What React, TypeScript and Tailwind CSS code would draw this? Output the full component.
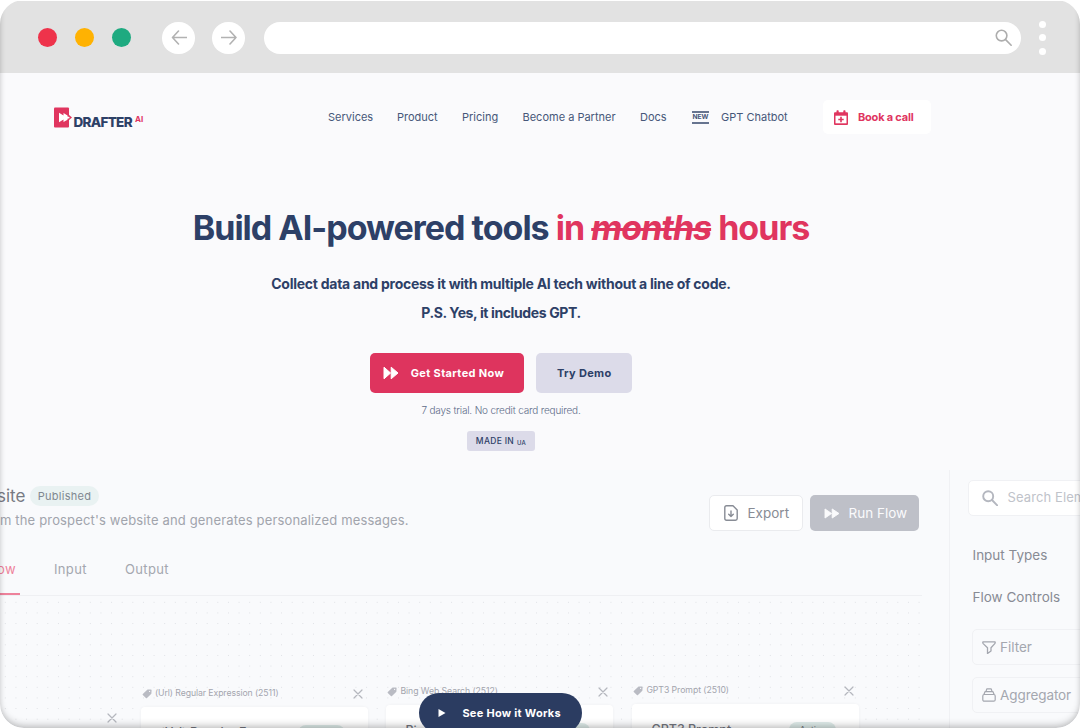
import React from "react";

type IconProps = { className?: string };

const FastForward = ({ className }: IconProps) => (
  <svg viewBox="0 0 16 14" preserveAspectRatio="none" className={className} fill="currentColor" stroke="currentColor" strokeWidth="1" strokeLinejoin="round">
    <path d="M1 1.200 7.600 7 1 12.800ZM8.200 1.200 15 7l-6.800 5.800Z" />
  </svg>
);

const Tag = ({ className }: IconProps) => (
  <svg viewBox="0 0 10 10" className={className} fill="currentColor">
    <path d="M5.600.6 9 .4q.6 0 .6.6l-.2 3.400q0 .3-.3.6L5 9.100q-.6.5-1.100 0L.8 6.100q-.5-.6 0-1.100L5 .9q.3-.3.6-.3Z" />
    <circle cx="7.600" cy="2.400" r=".6" fill="#fafafc" />
  </svg>
);

const Close = ({ className }: IconProps) => (
  <svg viewBox="0 0 10 10" className={className} fill="none" stroke="currentColor" strokeWidth="1.200" strokeLinecap="round">
    <path d="m1 1 8 8M9 1 1 9" />
  </svg>
);

const Magnifier = ({ className, width = 1.2 }: IconProps & { width?: number }) => (
  <svg viewBox="0 0 16 16" className={className} fill="none" stroke="currentColor" strokeWidth={width} strokeLinecap="round">
    <circle cx="6.200" cy="6.200" r="5" />
    <path d="m10 10 5.200 5.300" />
  </svg>
);

function BrowserBar() {
  return (
    <header className="mt-px flex h-[72px] shrink-0 items-center bg-[#e2e2e2] pb-px pl-[38.300px] pt-[2.500px]">
      <div className="flex gap-[18px]">
        <span className="h-[19px] w-[19px] rounded-full bg-[#ee334b]" />
        <span className="h-[19px] w-[19px] rounded-full bg-[#ffb202]" />
        <span className="h-[19px] w-[19px] rounded-full bg-[#1eaa80]" />
      </div>
      <div className="ml-[31px] flex gap-[17px] text-[#b2b2b2]">
        {["M15.500 7.500H1.500m6-6.500-6 6.500 6 6.500", "M.5 7.500h14.500m-6-6.500 6 6.500-6 6.500"].map((d) => (
          <span key={d} className="flex h-8 w-[33px] items-center justify-center rounded-full bg-white">
            <svg viewBox="0 0 16 15" className="h-[15px] w-4" fill="none" stroke="currentColor" strokeWidth="1.600" strokeLinecap="round" strokeLinejoin="round">
              <path d={d} />
            </svg>
          </span>
        ))}
      </div>
      <div className="ml-[19px] flex h-8 w-[757px] items-center justify-end rounded-full bg-white pr-[9px] text-[#adadad]">
        <Magnifier className="h-[17px] w-[17px]" width={1.5} />
      </div>
      <div className="ml-[18px] flex flex-col gap-[6.500px]">
        <span className="h-[7px] w-[6.500px] rounded-full bg-white" />
        <span className="h-[7px] w-[6.500px] rounded-full bg-white" />
        <span className="h-[7px] w-[6.500px] rounded-full bg-white" />
      </div>
    </header>
  );
}

function Logo() {
  return (
    <div className="flex h-[21px] w-[274.500px] items-start">
      <svg viewBox="0 0 18 21" className="h-[21px] w-[18px]">
        <rect x="0" y="0.500" width="15" height="20" rx="1" fill="#e0355f" />
        <path d="M14.500 7.500 18 10.500l-3.500 3Z" fill="#e0355f" />
        <path d="M5 5.800 9.500 8.500V6l4 2.500v1l2 .5v1.200l-2 .5v1L9.500 15v-2.500L5 15.200Z" fill="#fff" />
      </svg>
      <span className="ml-[2px] mt-[5px] text-[13.500px] font-extrabold leading-[20px] tracking-[-0.700px] text-[#2d4067]">DRAFTER</span>
      <span className="ml-[3px] mt-[7px] text-[8px] font-bold leading-[11px] text-[#e0355f]">AI</span>
    </div>
  );
}

function Nav() {
  return (
    <nav className="flex h-[34px] items-center pl-[53.500px] text-[11px] text-[#465779]">
      <Logo />
      <a className="w-[69px]">Services</a>
      <a className="w-[65px]">Product</a>
      <a className="w-[60.500px]">Pricing</a>
      <a className="w-[117.500px]">Become a Partner</a>
      <a className="w-[52px]">Docs</a>
      <span className="mt-px flex h-[13px] w-[17px] items-center justify-center border-y-2 border-[#66748f] text-[6.700px] font-bold leading-none tracking-[-0.100px]">NEW</span>
      <a className="ml-3 w-[102px]">GPT Chatbot</a>
      <button className="flex h-[34px] w-[108px] items-center rounded-[5px] bg-white pl-[11px] font-bold text-[#e0355f]">
        <svg viewBox="0 0 14 15" className="h-[15px] w-[14px]">
          <path d="M1 2.200h12q1 0 1 1V14q0 1-1 1H1q-1 0-1-1V3.200q0-1 1-1Z" fill="currentColor" />
          <rect x="2.500" y=".3" width="2.200" height="3.200" rx=".8" fill="currentColor" />
          <rect x="9.300" y=".3" width="2.200" height="3.200" rx=".8" fill="currentColor" />
          <path d="M1.500 5.700h11v7.600h-11Z" fill="#fff" />
          <path d="M7 6.800v5.400M4.300 9.500h5.400" stroke="currentColor" strokeWidth="1.600" />
        </svg>
        <span className="ml-[10px] tracking-[-0.200px]">Book a call</span>
      </button>
    </nav>
  );
}

function Hero() {
  return (
    <section className="flex w-[1002px] flex-col items-center text-[#2d4067]">
      <h1 className="mt-[70px] h-12 whitespace-nowrap text-[34px] font-bold leading-[48px] tracking-[-0.990px]">
        Build AI-powered tools{" "}
        <span className="text-[#e0355f]">
          in <s className="italic decoration-[3px]">months</s> hours
        </span>
      </h1>
      <p className="mt-[18px] whitespace-nowrap text-center text-[14px] font-bold leading-[28.500px] tracking-[-0.260px]">
        Collect data and process it with multiple AI tech without a line of code.
        <br />
        <span className="tracking-[-0.380px]">P.S. Yes, it includes GPT.</span>
      </p>
      <div className="mt-[26px] flex gap-3 text-[11px] font-bold tracking-[0.350px]">
        <button className="flex h-10 w-[154.500px] items-center rounded-[5px] bg-[#de345e] pl-[13px] text-white">
          <FastForward className="h-[14px] w-4" />
          <span className="ml-3">Get Started Now</span>
        </button>
        <button className="h-10 w-24 rounded-[5px] bg-[#dcdbe9]">Try Demo</button>
      </div>
      <p className="mt-[9px] text-[10px] font-light leading-4 tracking-[-0.180px] text-[#5d6b88]">7 days trial. No credit card required.</p>
      <span className="mt-[13px] flex h-5 w-[68px] items-center justify-center gap-[3px] rounded-[3px] bg-[#dcdbe9] pt-px text-[8.500px] font-medium tracking-[0.300px]">
        MADE IN <span className="mt-px text-[6px]">UA</span>
      </span>
    </section>
  );
}

function FlowNode({ place, label, title, status, tracking }: { place: string; label: string; title: string; status: string; tracking: string }) {
  return (
    <div className={`absolute w-[227px] ${place}`}>
      <div className="flex h-[11px] items-center px-[1px] text-[8.700px] text-[#a3a5ae]">
        <Tag className="h-[10px] w-[10px] text-[#b9bbc3]" />
        <span className={`ml-[3px] whitespace-nowrap ${tracking}`}>{label}</span>
        <Close className="ml-auto mr-[4px] h-[10px] w-[10px] text-[#b5b7be]" />
      </div>
      <div className="mt-[8px] flex h-20 justify-between rounded-[4px] bg-white pl-[19px] pr-[23px] pt-[17px] shadow-[0_0_3px_rgba(60,70,90,0.06)]">
        <span className="text-[12.500px] font-medium leading-[18px] text-[#74777f]">{title}</span>
        <span className="mt-px h-4 w-[47px] rounded-full bg-[#dfecea] text-center text-[9px] leading-4 text-[#74777f]">{status}</span>
      </div>
    </div>
  );
}

function Workspace() {
  return (
    <section className="flex h-[258px] bg-[#f9fafc]">
      <div className="w-[949px] shrink-0 pt-[13px]">
        <div className="flex h-[111px] justify-between pr-[30.500px]">
          <div className="-ml-[3px]">
            <div className="flex h-[26px] items-center text-[#777a83]">
              <h2 className="w-[33px] text-[17px] leading-6">site</h2>
              <span className="flex h-5 w-[69px] items-center justify-center rounded-full bg-[#e9f2f2] text-[11px] tracking-[0.250px] text-[#7f8790]">Published</span>
            </div>
            <p className="whitespace-nowrap pl-[3px] text-[13px] leading-[23px] tracking-[0.160px] text-[#a1a4ac]">m the prospect's website and generates personalized messages.</p>
            <div className="mt-[27px] flex text-[13px] leading-[20px] tracking-[0.350px] text-[#a4a7af]">
              <span className="w-[57px] text-[#ee829b]">ow</span>
              <span className="w-[71px]">Input</span>
              <span>Output</span>
            </div>
          </div>
          <div className="flex gap-[7px] pt-3 text-[13.500px]">
            <button className="flex h-9 w-[94px] items-center rounded-[5px] border border-[#eaebee] bg-white pl-[14px] text-[#888c95]">
              <svg viewBox="0 0 14 16" className="h-4 w-[14px]" fill="none" stroke="currentColor" strokeWidth="1.400" strokeLinejoin="round" strokeLinecap="round">
                <path d="M2.500.8H9L13.200 5v8.500q0 1.700-1.700 1.700h-9Q.8 15.200.8 13.500v-11Q.8.8 2.500.8Z" />
                <path d="M7 6v5.500M4.700 9.300 7 11.500l2.300-2.200" />
              </svg>
              <span className="ml-[10px]">Export</span>
            </button>
            <button className="flex h-9 w-[109px] items-center rounded-[5px] bg-[#bec0c8] pl-[14px] text-[#fafafc]">
              <FastForward className="h-[11px] w-4" />
              <span className="ml-[9px] whitespace-nowrap">Run Flow</span>
            </button>
          </div>
        </div>
        <div className="flex h-[2px] w-[922px] border-b border-[#eff0f3]">
          <span className="-mt-px h-[2px] w-5 bg-[#ee829b]" />
        </div>
        <div className="relative h-[131px] w-[927px] bg-[radial-gradient(circle,#dfe1e5_0.400px,transparent_0.900px)] bg-[size:10.640px_10.640px] bg-[position:0px_1px]">
          <Close className="absolute left-[107px] top-[116.500px] h-[10px] w-[10px] text-[#b5b7be]" />
          <FlowNode place="left-[141px] top-[92px]" tracking="tracking-[-0.080px]" label="(Url) Regular Expression (2511)" title="(Url) Regular Exp..." status="Active" />
          <FlowNode place="left-[386.400px] top-[90px]" tracking="tracking-[-0.050px]" label="Bing Web Search (2512)" title="Bing Web Search" status="Active" />
          <FlowNode place="left-[632.400px] top-[89px]" tracking="tracking-[-0.050px]" label="GPT3 Prompt (2510)" title="GPT3 Prompt" status="Active" />
        </div>
      </div>
      <aside className="w-[131px] shrink-0 overflow-hidden border-l border-[#f0f1f4] text-[13.500px] text-[#888b94]">
        <div className="ml-[18px] mt-[9.500px] flex h-9 w-[140px] items-center rounded-[5px] border border-[#f0f1f4] bg-white pl-[13px] text-[13px] text-[#c0c3ca]">
          <Magnifier className="h-4 w-4 shrink-0 text-[#b4b7bf]" width={1.9} />
          <span className="ml-[9.500px] whitespace-nowrap tracking-[0.100px]">Search Elements</span>
        </div>
        <p className="ml-[22.500px] mt-[29.500px] leading-5">Input Types</p>
        <p className="ml-[22.500px] mt-[22px] leading-5">Flow Controls</p>
        <div className="ml-[22px] mt-[22px] flex h-9 w-[140px] items-center rounded-[5px] border border-[#f0f1f4] pl-[9px] text-[#a4a7af]">
          <svg viewBox="0 0 14 13" className="h-[13px] w-[14px]" fill="none" stroke="currentColor" strokeWidth="1.300" strokeLinejoin="round">
            <path d="M1 .8h12q.5 1-.2 1.800L9 6.800V10L5.500 12.500V6.800L1.200 2.600Q.5 1.800 1 .8Z" />
          </svg>
          <span className="ml-[4px]">Filter</span>
        </div>
        <div className="ml-[22px] mt-[12px] flex h-9 w-[140px] items-center rounded-[5px] border border-[#f0f1f4] pl-[9px] text-[#a4a7af]">
          <svg viewBox="0 0 14 14" className="h-[14px] w-[14px]" fill="none" stroke="currentColor" strokeWidth="1.200" strokeLinejoin="round" strokeLinecap="round">
            <rect x=".8" y="6.500" width="12.400" height="6.700" rx="1.500" />
            <path d="M2 6.300 3 3.700h8l1 2.600M4 3.400 4.800.9h4.400l.8 2.500" />
          </svg>
          <span className="ml-[4px] tracking-[-0.080px]">Aggregator</span>
        </div>
      </aside>
    </section>
  );
}

export default function App() {
  return (
    <div className="h-[728px] w-[1080px] overflow-hidden bg-white">
      <div className="relative flex h-[728px] w-[1080px] flex-col overflow-hidden rounded-[24px] bg-white font-['Inter',sans-serif]">
        <BrowserBar />
        <main className="h-[655px] bg-[#fafafc] pt-[27px]">
          <Nav />
          <Hero />
          <div className="mt-[19px]">
            <Workspace />
          </div>
        </main>
        <div className="pointer-events-none absolute inset-x-0 -top-5 bottom-0 rounded-[24px] shadow-[inset_0_-4px_7px_-1px_rgba(0,0,0,0.200),inset_0_0_5px_rgba(0,0,0,0.080)]" />
        <button className="absolute left-[419.400px] top-[693px] flex h-10 w-[163px] items-center rounded-full bg-[#2b3c61] pl-[19px] text-[11px] font-bold tracking-[0.280px] text-white">
          <svg viewBox="0 0 8 8" className="h-2 w-2" fill="currentColor">
            <path d="M.5 0 7.500 4 .5 8Z" />
          </svg>
          <span className="ml-4">See How it Works</span>
        </button>
      </div>
    </div>
  );
}
